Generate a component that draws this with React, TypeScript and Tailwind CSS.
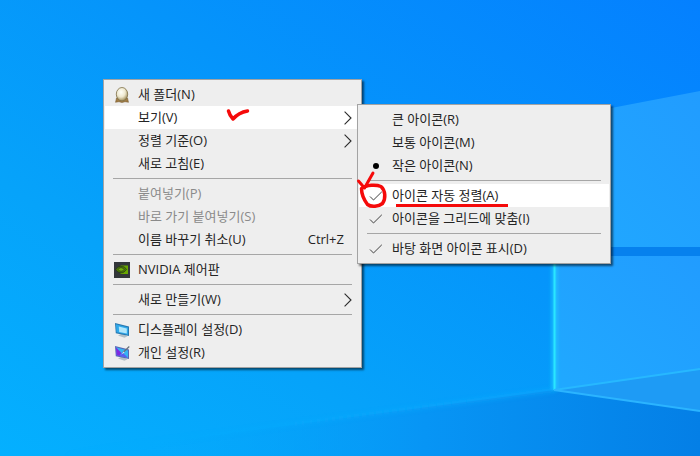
import type { ReactNode } from 'react'

interface MenuEntry {
  label: string
  icon?: ReactNode
  shortcut?: string
  submenu?: boolean
  disabled?: boolean
  active?: boolean
}

// ── Icons ─────────────────────────────────────────────────────────────────────

function EggIcon() {
  return (
    <svg viewBox="0 0 16 16" className="size-4" aria-hidden="true">
      <defs>
        <radialGradient id="egg" cx="0.42" cy="0.35" r="0.65">
          <stop offset="0" stopColor="#fffff8" />
          <stop offset="0.55" stopColor="#eee8cf" />
          <stop offset="1" stopColor="#a08e5c" />
        </radialGradient>
      </defs>
      <path d="M1.500 15.300 2.500 11h11l1 4.300-3.500-.6-3 .9-3-.9z" fill="#a07c45" stroke="#75592f" strokeWidth="0.5" />
      <ellipse cx="8" cy="7.200" rx="5.700" ry="6.700" fill="url(#egg)" stroke="#7d7048" strokeWidth="0.8" />
    </svg>
  )
}

function NvidiaIcon() {
  return (
    <svg viewBox="0 0 16 16" className="size-4" aria-hidden="true">
      <rect width="16" height="16" fill="#33373a" />
      <path d="M6.500 3.500H14v8.500H6.500z" fill="#69a800" />
      <path d="M1.800 7.500C3.400 4.900 6 3.900 8.500 4.400c1.900.4 3.200 1.700 4 3-1.400 2-3.200 3.500-5.600 3.400C4.600 10.700 2.800 9.300 1.800 7.500z" fill="#4d7d06" stroke="#26361a" strokeWidth="0.8" />
      <path d="M4 7.500c1-1.600 2.600-2.100 4-1.700 1 .3 1.700.9 2.100 1.600-.8 1.200-1.900 1.900-3.200 1.800C5.600 9.100 4.700 8.400 4 7.500z" fill="#74b30c" stroke="#26361a" strokeWidth="0.7" />
    </svg>
  )
}

function DisplayIcon() {
  return (
    <svg viewBox="0 0 16 16" className="size-4" aria-hidden="true">
      <path d="M4 13.500 8 11.500l5.500 2.800-3 1.400z" fill="#b3bfc6" />
      <path d="M1 1 15 4.600V14L1.800 11.200z" fill="#2878b0" />
      <path d="M1.900 2.200 14 5.400v7.300L2.500 10.200z" fill="#2fa8ea" />
      <path d="M4.800 4.600 12.800 6.600v5L5.200 9.900z" fill="#b0e6fc" />
    </svg>
  )
}

function PersonalizeIcon() {
  return (
    <svg viewBox="0 0 16 16" className="size-4" aria-hidden="true">
      <path d="M4 13.500 8 11.500l5.500 2.800-3 1.400z" fill="#b3bfc6" />
      <path d="M1 1 15 4.600V14L1.800 11.200z" fill="#5668b4" />
      <path d="M1.900 2.200 14 5.400v7.300L2.500 10.200z" fill="#36b4f2" />
      <path d="M1.900 2.200 7.500 8l-2 2.900-3-.7z" fill="#7d2be0" />
      <path d="M5.500 10.900 8.500 7.500 14 12.700z" fill="#5a5df0" />
      <path d="M15.300 1.500 9 7.500" stroke="#68717c" strokeWidth="1.200" />
      <path d="M9.800 6.600 7.300 9.500l3.200-1.900z" fill="#e7edf2" />
    </svg>
  )
}

function CheckIcon() {
  return (
    <svg viewBox="0 0 14 10" className="h-2.5 w-3.5" fill="none" stroke="#404040" strokeWidth="1" aria-hidden="true">
      <path d="M1 5.500 4.500 9 12.800.8" />
    </svg>
  )
}

function Chevron() {
  return (
    <svg viewBox="0 0 8 14" className="h-3.5 w-2" fill="none" stroke="#2b2b2b" strokeWidth="1.100" aria-hidden="true">
      <path d="M.6.600 7 7 .6 13.400" />
    </svg>
  )
}

function Bullet() {
  return <span className="size-1.5 rounded-full bg-black" />
}

// ── Menu data ─────────────────────────────────────────────────────────────────

const MAIN_GROUPS: MenuEntry[][] = [
  [
    { label: '새 폴더(N)', icon: <EggIcon /> },
    { label: '보기(V)', submenu: true, active: true },
    { label: '정렬 기준(O)', submenu: true },
    { label: '새로 고침(E)' },
  ],
  [
    { label: '붙여넣기(P)', disabled: true },
    { label: '바로 가기 붙여넣기(S)', disabled: true },
    { label: '이름 바꾸기 취소(U)', shortcut: 'Ctrl+Z' },
  ],
  [{ label: 'NVIDIA 제어판', icon: <NvidiaIcon /> }],
  [{ label: '새로 만들기(W)', submenu: true }],
  [
    { label: '디스플레이 설정(D)', icon: <DisplayIcon /> },
    { label: '개인 설정(R)', icon: <PersonalizeIcon /> },
  ],
]

const VIEW_GROUPS: MenuEntry[][] = [
  [
    { label: '큰 아이콘(R)' },
    { label: '보통 아이콘(M)' },
    { label: '작은 아이콘(N)', icon: <Bullet /> },
  ],
  [
    { label: '아이콘 자동 정렬(A)', icon: <CheckIcon />, active: true },
    { label: '아이콘을 그리드에 맞춤(I)', icon: <CheckIcon /> },
  ],
  [{ label: '바탕 화면 아이콘 표시(D)', icon: <CheckIcon /> }],
]

// ── Menu ──────────────────────────────────────────────────────────────────────

function MenuRow({ entry }: { entry: MenuEntry }) {
  return (
    <button
      type="button"
      role="menuitem"
      disabled={entry.disabled}
      className={`flex h-[23px] w-full items-center pr-2 text-left text-[13px] whitespace-nowrap ${
        entry.active ? 'bg-white' : ''
      } ${entry.disabled ? 'text-[#8a8a8a]' : 'text-[#242424]'}`}
    >
      <span className="flex w-[33px] shrink-0 items-center justify-center">{entry.icon}</span>
      <span className="flex-1">{entry.label}</span>
      {entry.shortcut && <span className="pr-2">{entry.shortcut}</span>}
      {entry.submenu && <Chevron />}
    </button>
  )
}

function Menu({ label, groups, className }: { label: string; groups: MenuEntry[][]; className: string }) {
  return (
    <div
      role="menu"
      aria-label={label}
      className={`absolute border border-[#a3a3a3] bg-[#eeeeee] px-px py-[3px] shadow-[2px_2px_2px_rgba(0,0,0,0.55)] ${className}`}
    >
      {groups.map((group, i) => (
        <div key={i}>
          {i > 0 && <div role="separator" className="mx-2 my-[3px] h-px bg-[#a6a6a6]" />}
          {group.map(entry => <MenuRow key={entry.label} entry={entry} />)}
        </div>
      ))}
    </div>
  )
}

// ── Wallpaper ─────────────────────────────────────────────────────────────────

function Wallpaper() {
  return (
    <svg viewBox="0 0 700 456" preserveAspectRatio="xMidYMid slice" className="absolute inset-0 size-full" aria-hidden="true">
      <defs>
        <linearGradient id="sky" x1="0" y1="1" x2="1" y2="0">
          <stop offset="0" stopColor="#04b0ff" />
          <stop offset="0.300" stopColor="#06a3fa" />
          <stop offset="0.600" stopColor="#0594fb" />
          <stop offset="1" stopColor="#0480ff" />
        </linearGradient>
        <linearGradient id="floor" gradientUnits="userSpaceOnUse" x1="150" y1="0" x2="700" y2="0">
          <stop offset="0" stopColor="#05a8fb" stopOpacity="0" />
          <stop offset="0.500" stopColor="#0795f5" />
          <stop offset="1" stopColor="#047fe6" />
        </linearGradient>
        <linearGradient id="beam" gradientUnits="userSpaceOnUse" x1="60" y1="0" x2="554" y2="0">
          <stop offset="0" stopColor="#0fb0ff" stopOpacity="0" />
          <stop offset="1" stopColor="#0fb0ff" />
        </linearGradient>
        <linearGradient id="pane" x1="0" y1="1" x2="1" y2="0">
          <stop offset="0" stopColor="#20a9ff" />
          <stop offset="1" stopColor="#219cff" />
        </linearGradient>
        <filter id="glow" filterUnits="userSpaceOnUse" x="0" y="0" width="700" height="456">
          <feGaussianBlur stdDeviation="2" />
        </filter>
      </defs>
      <rect width="700" height="456" fill="url(#sky)" />
      <path d="M60 456 554 390 700 410v46z" fill="url(#floor)" />
      <path d="M60 455 554 390" stroke="url(#beam)" strokeWidth="4" opacity="0.5" filter="url(#glow)" />
      <path d="M554 119 700 91v156H554z" fill="url(#pane)" />
      <path d="M554 247h146v9H554z" fill="#0681ee" />
      <path d="M554 256h146v113L554 390z" fill="url(#pane)" />
      <path d="M554 390 700 369v42z" fill="#1e9bf5" />
      <path d="M554.500 256v134" stroke="#1fd0ff" strokeWidth="4" filter="url(#glow)" />
      <path d="M554.500 256v134" stroke="#2ae6ff" strokeWidth="2" />
      <path d="M554 390 700 369" stroke="#27b8ff" strokeWidth="2" />
      <path d="M554 390 700 411" stroke="#2bb4ff" strokeWidth="2" />
    </svg>
  )
}

// ── Red pen marks ─────────────────────────────────────────────────────────────

function PenMarks() {
  return (
    <svg
      viewBox="0 0 700 456"
      className="pointer-events-none absolute top-0 left-0 h-[456px] w-[700px]"
      fill="none"
      stroke="#f50a0a"
      strokeLinecap="round"
      strokeLinejoin="round"
      aria-hidden="true"
    >
      <path d="M228.500 111c.8 3 2.500 6 4.500 8 3.500-4 8.500-7 14.500-8" strokeWidth="3.500" />
      <path d="M358.500 181 364.500 188 373 173" strokeWidth="3" />
      <path d="M361.500 188.500c5-4 15-4 19.500-2 4.500 4 5 12 1.500 17-4 3-11 4-15 1-3-4-6-9-6-16z" strokeWidth="3.500" />
      <path d="M396 205.500H508" strokeWidth="3" strokeLinecap="butt" />
    </svg>
  )
}

export default function App() {
  return (
    <main className="relative min-h-screen overflow-hidden bg-[#0698fa] font-['Open_Sans','Noto_Sans_CJK_KR',sans-serif]">
      <Wallpaper />
      <Menu label="바탕 화면" groups={MAIN_GROUPS} className="top-[79px] left-[103px] w-[259px]" />
      <Menu label="보기" groups={VIEW_GROUPS} className="top-[104px] left-[357px] w-[254px]" />
      <PenMarks />
    </main>
  )
}
